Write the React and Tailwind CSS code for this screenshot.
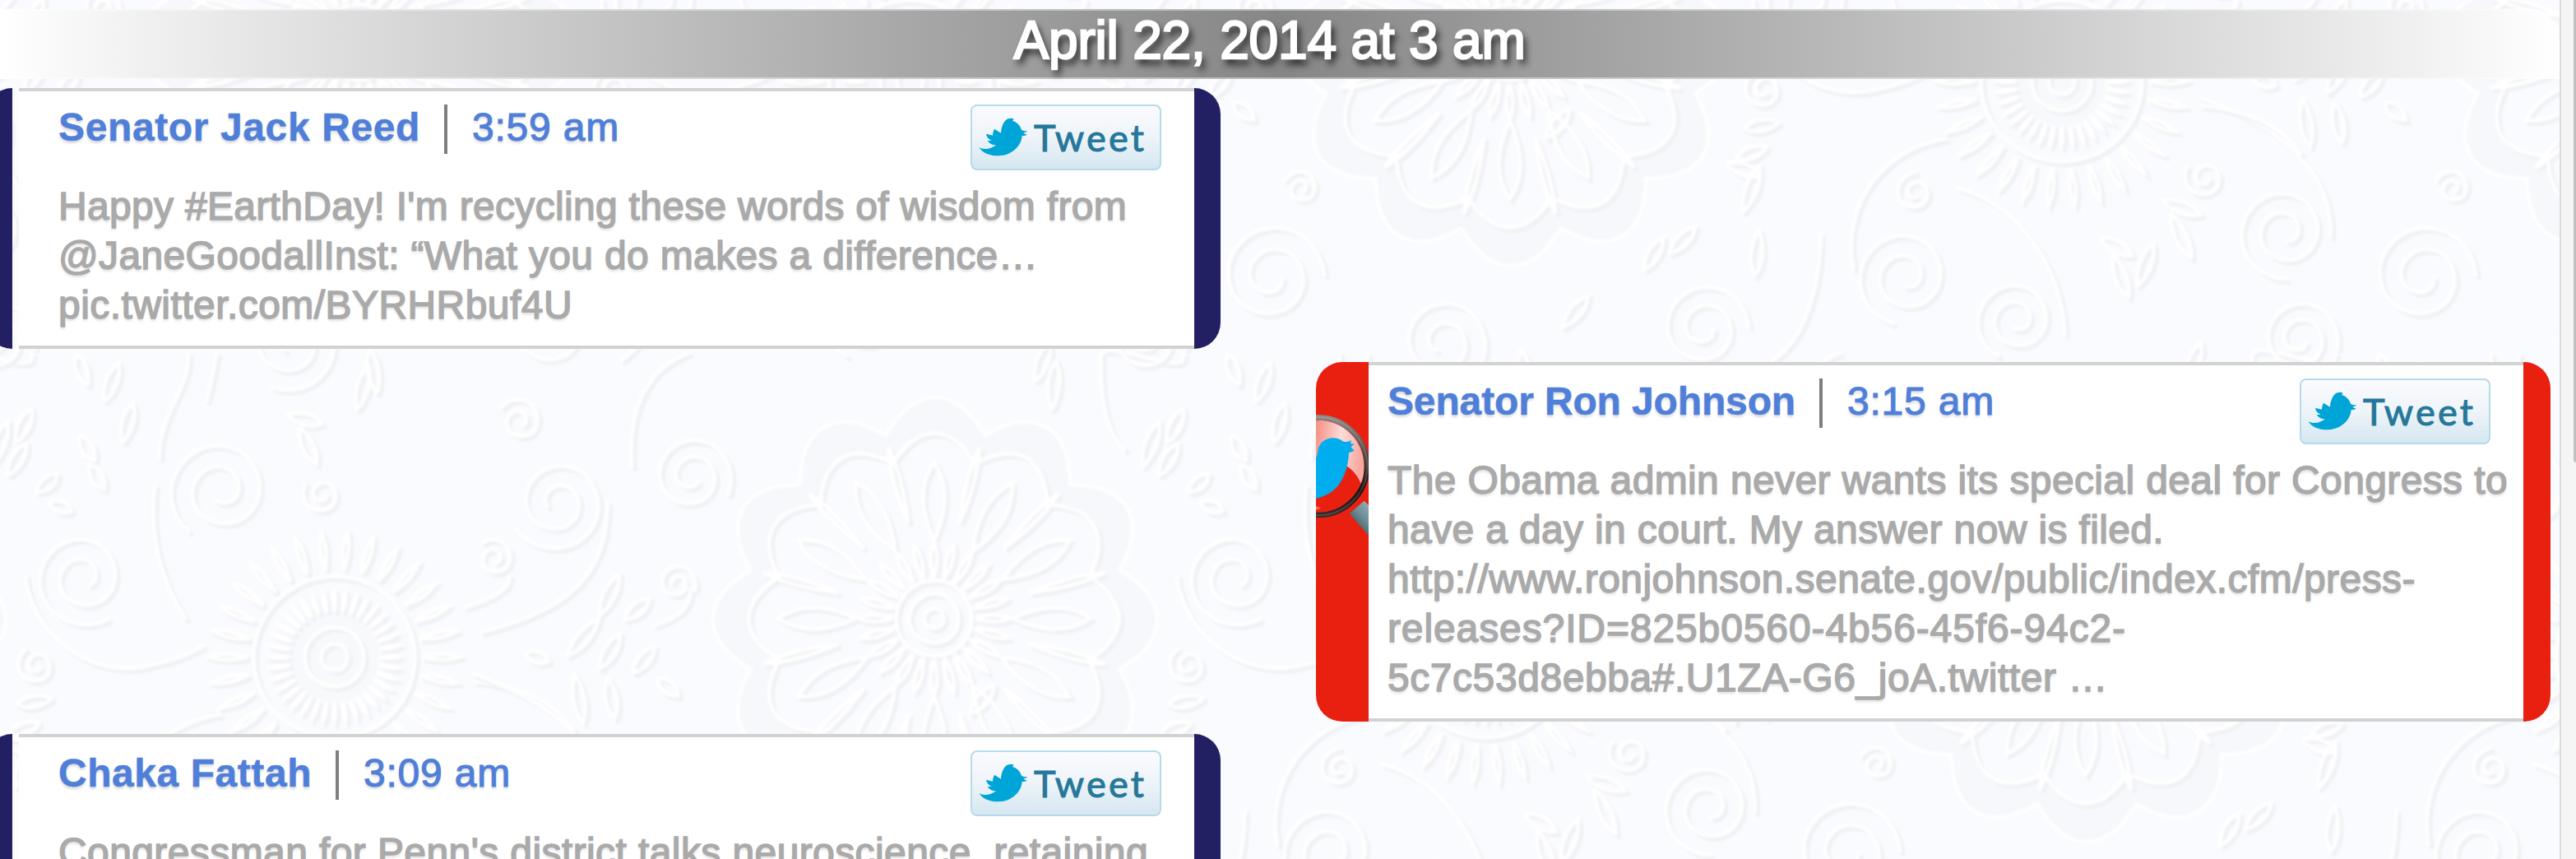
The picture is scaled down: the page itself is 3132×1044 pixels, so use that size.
import { useLayoutEffect, useRef, useState } from "react";

/* Text set to a given advance width by adjusting its tracking. */
function FitText({ text, width, className = "" }) {
  const ref = useRef(null);
  const [spacing, setSpacing] = useState(0);
  useLayoutEffect(() => {
    const natural = ref.current.getBoundingClientRect().width - spacing * text.length;
    setSpacing((width - natural) / text.length);
  }, [text, width]);
  return (
    <span ref={ref} className={`inline-block whitespace-pre ${className}`} style={{ letterSpacing: `${spacing}px` }}>
      {text}
    </span>
  );
}

/* Two-turn spiral ending on the outside with a short tail. */
function spiral(cx, cy, r, start = 0, dir = 1) {
  const pts = [];
  const turns = r < 40 ? 1.6 : 2;
  for (let i = 0; i <= 60; i++) {
    const t = i / 60;
    const a = start + dir * t * turns * Math.PI * 2;
    const rad = r * (0.2 + 0.8 * t);
    pts.push(`${(cx + rad * Math.cos(a)).toFixed(1)} ${(cy + rad * Math.sin(a)).toFixed(1)}`);
  }
  return "M" + pts.join("L");
}

/* Closed outline with rounded lobes around a centre. */
function scallop(cx, cy, r, bulge, n) {
  const pts = [];
  for (let i = 0; i <= 240; i++) {
    const a = (i / 240) * Math.PI * 2;
    const rad = r + bulge * Math.abs(Math.cos((a * n) / 2 + (Math.PI * n) / 4));
    pts.push(`${(cx + rad * Math.cos(a)).toFixed(1)} ${(cy + rad * Math.sin(a)).toFixed(1)}`);
  }
  return "M" + pts.join("L") + "Z";
}

function petal(cx, cy, a, r0, r1, w) {
  const p = (r, o) =>
    `${(cx + r * Math.cos(a) - o * Math.sin(a)).toFixed(1)} ${(cy + r * Math.sin(a) + o * Math.cos(a)).toFixed(1)}`;
  const m = r0 + (r1 - r0) * 0.6;
  return `M${p(r0, 0)}Q${p(m, w)} ${p(r1, 0)}Q${p(m, -w)} ${p(r0, 0)}`;
}

function ring(cx, cy, n, r0, r1, w, phase = 0) {
  let d = "";
  for (let i = 0; i < n; i++) d += petal(cx, cy, phase + (i / n) * Math.PI * 2, r0, r1, w);
  return d;
}

function circle(cx, cy, r) {
  return `M${cx - r} ${cy}a${r} ${r} 0 1 0 ${2 * r} 0a${r} ${r} 0 1 0 ${-2 * r} 0`;
}

function leaf(x, y, deg, len = 40, w = 14) {
  return petal(x, y, (deg * Math.PI) / 180, 0, len, w);
}

const LINES = [
  spiral(270, 597, 64, 2.2, -1),
  spiral(393, 602, 24, 0, 1),
  spiral(102, 703, 60, 1, -1),
  spiral(46, 810, 24, 0.4, 1),
  spiral(679, 612, 60, 2.6, 1),
  spiral(633, 513, 28, 1.2, -1),
  spiral(842, 580, 50, 0.5, 1),
  spiral(602, 680, 24, 1.5, -1),
  spiral(824, 710, 24, 3, 1),
  spiral(847, 1037, 65, 0, 1),
  spiral(883, 930, 22, 1, -1),
  spiral(1055, 1117, 60, 2, 1),
  spiral(1630, 935, 24, 1, 1),
  spiral(1618, 1037, 60, 1.8, -1),
  spiral(1373, 1100, 55, 0, 1),
  spiral(1753, 1090, 50, 2, -1),
  spiral(1982, 917, 25, 0, 1),
  spiral(2079, 983, 58, 1.5, -1),
  spiral(2097, 1113, 48, 0.3, 1),
  "M190 590C182 660 200 710 228 755",
  "M32 700C40 770 110 830 184 810C215 804 235 795 250 785",
  "M740 610C742 700 690 745 585 770",
  "M770 570C765 500 785 450 840 430",
  "M620 700C625 715 600 730 565 740",
  "M840 715C845 740 820 755 795 762",
  "M577 830C640 835 680 860 700 890",
  "M1440 430C1450 470 1330 400 1340 440C1340 500 1350 530 1370 550",
  "M1555 1030C1540 950 1590 880 1670 870",
  "M1680 930C1760 950 1810 1030 1812 1110",
  "M1975 820C2060 850 2140 900 2135 990",
  "M1515 985C1515 1060 1490 1120 1455 1140",
  "M230 430C235 470 195 500 195 560",
  "M265 430C260 460 255 480 252 490",
  leaf(128, 490, -70, 50), leaf(150, 540, -75, 50), leaf(108, 470, -110, 40), leaf(98, 530, 60, 36),
  leaf(110, 565, 60, 36), leaf(20, 540, -65, 46), leaf(10, 580, -60, 46), leaf(45, 600, -40, 34),
  leaf(60, 612, 20, 30), leaf(350, 505, 15, 44), leaf(365, 520, 65, 50), leaf(435, 500, -75, 56),
  leaf(460, 480, -100, 54), leaf(730, 750, -65, 56), leaf(760, 755, -40, 40), leaf(690, 800, -50, 60),
  leaf(730, 815, -60, 50), leaf(770, 820, -50, 42), leaf(640, 795, 20, 30), leaf(800, 825, 40, 34),
  leaf(700, 820, 80, 60), leaf(740, 825, 80, 50), leaf(1260, 465, -70, 50), leaf(1280, 500, -85, 60),
  leaf(1390, 570, -70, 60), leaf(1300, 1030, -60, 46), leaf(1330, 1010, -45, 46), leaf(1200, 1100, -50, 50),
  leaf(1180, 870, -50, 46), leaf(1440, 980, 95, 56), leaf(1420, 960, -70, 60), leaf(1400, 900, 20, 44),
  leaf(1930, 945, 20, 50), leaf(1940, 960, 65, 60), leaf(1855, 990, 30, 44), leaf(1870, 1010, 70, 56),
  leaf(1450, 880, 160, 40), leaf(1465, 850, 170, 44), leaf(1900, 1050, -70, 56),
  ring(1137, 753, 12, 95, 190, 26),
  ring(1137, 753, 24, 50, 92, 8),
  ring(1137, 753, 12, 120, 215, 8, Math.PI / 12),
  scallop(1137, 753, 195, 30, 12),
  circle(1137, 753, 46), circle(1137, 753, 30), circle(1137, 753, 12),
  ring(408, 800, 30, 106, 152, 7),
  ring(408, 800, 36, 55, 78, 3),
  circle(408, 800, 98), circle(408, 800, 36), circle(408, 800, 16),
].join("");

const SHIFTS = [
  [0, 0], [1400, 0], [2800, 0], [-1400, 0], [-700, -700], [700, -700], [2100, -700], [-2100, -700],
  [-700, 700], [700, 700], [2100, 700],
];

function EmbossedBackdrop() {
  return (
    <svg className="absolute inset-0" width="3132" height="1044" aria-hidden="true">
      <defs>
        <filter id="soft" x="-5%" y="-5%" width="110%" height="110%">
          <feGaussianBlur stdDeviation="1.8" />
        </filter>
        <g id="motif" fill="none" filter="url(#soft)">
          <path d={scallop(1137, 753, 232, 38, 12)} fill="#f7f8fc" />
          <path d={scallop(1137, 753, 195, 30, 12)} fill="#fafbfe" />
          <path d={circle(408, 800, 80)} fill="#f8f9fc" />
          <path d={LINES} stroke="#f0f1f5" strokeWidth="5" transform="translate(2.5 2.5)" />
          <path d={LINES} stroke="#ffffff" strokeWidth="4.5" transform="translate(-1.5 -1.5)" />
          <path d={scallop(1137, 753, 232, 38, 12)} stroke="#ffffff" strokeWidth="4" />
        </g>
      </defs>
      {SHIFTS.map(([x, y]) => (
        <use key={`${x},${y}`} href="#motif" x={x} y={y} />
      ))}
    </svg>
  );
}

function TweetButton() {
  return (
    <div className="flex h-[80px] w-[232px] shrink-0 rounded-[8px] border-2 border-[#b5dbe9] bg-linear-to-b from-[#fbfbfe] via-[#eef4f9] to-[#d5e7f1]">
      <svg className="mt-[8px] ml-[3px] shrink-0" width="72" height="60" viewBox="0 0 216 180" fill="#00a5d8">
        <path d="M16 126C34 136 58 134 78 118C66 119 54 113 47 102L62 101C50 96 43 88 42 77L66 83C66 76 68 66 72 59C80 64 88 69 96 74C97 52 106 28 122 22C130 19 138 20 143 23L138 30C152 33 165 44 171 62C178 67 186 67 192 66C188 71 184 73 178 74C183 77 188 79 192 79C186 84 179 85 173 84C172 116 140 156 86 157C54 157 28 146 16 126Z" />
      </svg>
      <FitText
        text="Tweet"
        width={137}
        className="font-['Lato',sans-serif] text-[45px] leading-[77px] text-[#25789a] [-webkit-text-stroke:1px_#25789a]"
      />
    </div>
  );
}

function Magnifier() {
  return (
    <svg className="mt-[40px]" width="64" height="190" viewBox="30 0 192 570">
      <defs>
        <linearGradient id="gloss" x1="0" y1="0" x2="1" y2="0.2">
          <stop offset="0" stopColor="#f58c80" />
          <stop offset="0.55" stopColor="#fbdcd9" />
          <stop offset="1" stopColor="#f7a9a2" />
        </linearGradient>
        <linearGradient id="rim" x1="0" y1="0" x2="0" y2="1">
          <stop offset="0" stopColor="#8d8583" />
          <stop offset="0.35" stopColor="#5d4a48" />
          <stop offset="0.75" stopColor="#1a1010" />
          <stop offset="1" stopColor="#3a2a2a" />
        </linearGradient>
        <linearGradient id="grip" x1="0" y1="1" x2="1" y2="0">
          <stop offset="0.1" stopColor="#223c42" />
          <stop offset="0.5" stopColor="#6f8e95" />
          <stop offset="0.85" stopColor="#a9c0c6" />
        </linearGradient>
      </defs>
      <path d="M152 432L206 386L290 470L250 545Z" fill="url(#grip)" />
      <circle cx="38" cy="260" r="170" fill="#e91f10" />
      <path d="M38 92C130 92 206 165 206 260C206 285 202 310 196 326C180 290 160 270 140 258L30 230V92Z" fill="url(#gloss)" />
      <path d="M30 228C36 222 36 208 38 198C44 172 68 157 92 157C108 157 120 162 130 170C142 172 152 170 158 164L157 178L170 178L158 190L170 204L150 211C148 262 134 300 110 332C86 358 60 370 30 378Z" fill="#00adee" />
      <path d="M30 405L48 413L30 419Z" fill="#ff6a5c" />
      <circle cx="38" cy="260" r="178" fill="none" stroke="url(#rim)" strokeWidth="20" />
      <circle cx="38" cy="260" r="179" fill="none" stroke="#ffffff" strokeOpacity="0.15" strokeWidth="6" />
    </svg>
  );
}

function TweetBody({ name, nameWidth, time, lines, className }) {
  return (
    <div className={`flex flex-col border-y-4 border-[#d2d2d2] bg-white pt-4 ${className}`}>
      <div className="flex h-[80px] items-start pr-[40px] text-[48px] leading-[60px] text-[#507fd9] [text-shadow:0_3px_3px_rgba(0,0,0,0.14)]">
        <FitText text={name} width={nameWidth} className="-mt-[2px] font-bold [-webkit-text-stroke:0.5px_#507fd9]" />
        <div className="ml-[29px] h-[60px] w-[4px] bg-[#7f7f7f]" />
        <FitText text={time} width={179} className="-mt-[2px] ml-[30px] [-webkit-text-stroke:1.1px_#507fd9]" />
        <div className="ml-auto [text-shadow:none]">
          <TweetButton />
        </div>
      </div>
      <div className="mt-[14px] flex flex-col text-[48px] leading-[60px] text-[#aaaaaa] [-webkit-text-stroke:1.5px_#aaaaaa] [text-shadow:0_3px_3px_rgba(0,0,0,0.12)]">
        {lines.map(([text, width]) => (
          <div key={text}>
            <FitText text={text} width={width} />
          </div>
        ))}
      </div>
    </div>
  );
}

function DemocratCard({ className, ...tweet }) {
  return (
    <div className={`flex shrink-0 ${className}`}>
      <div className="w-[32px] shrink-0 rounded-l-[32px] bg-[#231f63]" />
      <TweetBody {...tweet} className="ml-[8px] w-[1429px] shrink-0 pl-[48px]" />
      <div className="w-[32px] shrink-0 rounded-r-[32px] bg-[#231f63]" />
    </div>
  );
}

function RepublicanCard({ className, ...tweet }) {
  return (
    <div className={`flex shrink-0 ${className}`}>
      <div className="w-[64px] shrink-0 overflow-hidden rounded-l-[32px] bg-[#e91f10]">
        <Magnifier />
      </div>
      <TweetBody {...tweet} className="w-[1404px] shrink-0 pl-[23px]" />
      <div className="w-[33px] shrink-0 rounded-r-[32px] bg-[#e91f10]" />
    </div>
  );
}

export default function App() {
  return (
    <div className="relative flex h-[1044px] w-[3132px] overflow-hidden bg-[#fafbfe] font-['Liberation_Sans',Arial,sans-serif]">
      <EmbossedBackdrop />
      <main className="relative flex h-[1044px] w-[3112px] flex-col overflow-hidden">
        <h1 className="mt-[11px] flex h-[85px] shrink-0 justify-center rounded-tr-[36px] border-y-2 border-[#ffffff66] bg-linear-to-r from-white via-[#868686] to-white pr-[25px] text-[64px] font-normal leading-[73px] text-white [-webkit-text-stroke:2.4px_white] [text-shadow:4px_7px_9px_rgba(0,0,0,0.85)]">
          <FitText text="April 22, 2014 at 3 am" width={622} />
        </h1>
        <div className="mt-[11px] flex">
          <div className="flex w-[1484px] shrink-0 flex-col gap-[468px]">
            <DemocratCard
              className="-ml-[17px] h-[317px]"
              name="Senator Jack Reed"
              nameWidth={440}
              time="3:59 am"
              lines={[
                ["Happy #EarthDay! I'm recycling these words of wisdom from", 1299],
                ["@JaneGoodallInst: “What you do makes a difference…", 1191],
                ["pic.twitter.com/BYRHRbuf4U", 625],
              ]}
            />
            <DemocratCard
              className="-ml-[17px] h-[317px]"
              name="Chaka Fattah"
              nameWidth={308}
              time="3:09 am"
              lines={[["Congressman for Penn's district talks neuroscience, retaining", 1325]]}
            />
          </div>
          <RepublicanCard
            className="mt-[333px] ml-[116px] h-[437px]"
            name="Senator Ron Johnson"
            nameWidth={496}
            time="3:15 am"
            lines={[
              ["The Obama admin never wants its special deal for Congress to", 1362],
              ["have a day in court. My answer now is filed.", 944],
              ["http://www.ronjohnson.senate.gov/public/index.cfm/press-", 1250],
              ["releases?ID=825b0560-4b56-45f6-94c2-", 898],
              ["5c7c53d8ebba#.U1ZA-G6_joA.twitter …", 876],
            ]}
          />
        </div>
      </main>
      <aside className="relative flex w-[20px] justify-end border-l-2 border-[#dcdcdc] bg-[#f5f5f6]">
        <div className="h-[562px] w-[3px] rounded-bl-[8px] bg-[#c1c1c1]" />
      </aside>
    </div>
  );
}
